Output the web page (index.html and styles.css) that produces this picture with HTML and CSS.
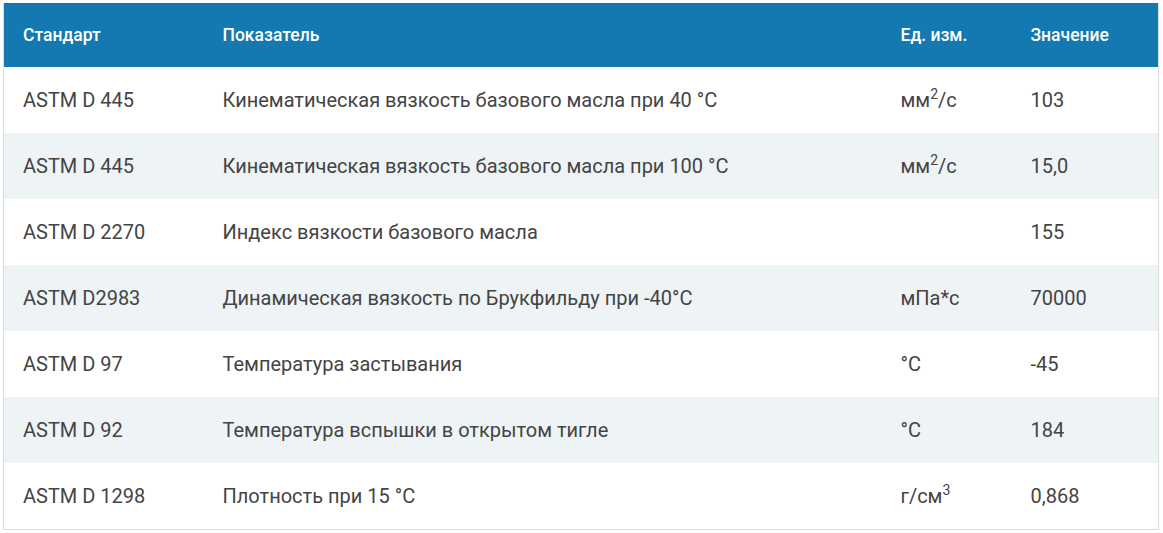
FILE: index.html
```html
<!DOCTYPE html>
<html lang="ru">
<head>
<meta charset="utf-8">
<link rel="stylesheet" href="styles.css">
</head>
<body>
<div class="wrap">
<table class="spec">
<colgroup>
<col class="c1"><col class="c2"><col class="c3"><col class="c4">
</colgroup>
<thead>
<tr><th>Стандарт</th><th>Показатель</th><th>Ед. изм.</th><th>Значение</th></tr>
</thead>
<tbody>
<tr><td>ASTM D 445</td><td>Кинематическая вязкость базового масла при 40 °C</td><td>мм<sup>2</sup>/с</td><td>103</td></tr>
<tr><td>ASTM D 445</td><td>Кинематическая вязкость базового масла при 100 °C</td><td>мм<sup>2</sup>/с</td><td>15,0</td></tr>
<tr><td>ASTM D 2270</td><td>Индекс вязкости базового масла</td><td></td><td>155</td></tr>
<tr><td>ASTM D2983</td><td>Динамическая вязкость по Брукфильду при -40°C</td><td>мПа*с</td><td>70000</td></tr>
<tr><td>ASTM D 97</td><td>Температура застывания</td><td>°C</td><td>-45</td></tr>
<tr><td>ASTM D 92</td><td>Температура вспышки в открытом тигле</td><td>°C</td><td>184</td></tr>
<tr><td>ASTM D 1298</td><td>Плотность при 15 °C</td><td>г/см<sup>3</sup></td><td>0,868</td></tr>
</tbody>
</table>
</div>
</body>
</html>
```
FILE: styles.css
```css
html, body {
  margin: 0;
  padding: 0;
  background: #ffffff;
}
.wrap {
  padding: 3px 5px 0 3px;
}
.spec {
  width: 1155px;
  border-collapse: collapse;
  table-layout: fixed;
  font-family: Roboto, "Liberation Sans", sans-serif;
  font-size: 20px;
  font-weight: 400;
  color: #444444;
  border: 1px solid #dcdcdc;
  border-top: none;
}
.c1 { width: 200px; }
.c2 { width: 678px; }
.c3 { width: 130px; }
.c4 { width: 147px; }
.spec th {
  background: #1479b0;
  color: #ffffff;
  font-weight: 500;
  text-align: left;
  height: 64px;
  padding: 0 19px;
  font-size: 17.5px;
}
.spec td {
  height: 66px;
  padding: 0 19px;
  vertical-align: middle;
  white-space: nowrap;
}
.spec tbody tr:nth-child(even) td {
  background: #eef3f6;
}
.spec sup {
  font-size: 14px;
  line-height: 0;
  vertical-align: 0.6em;
}
```
